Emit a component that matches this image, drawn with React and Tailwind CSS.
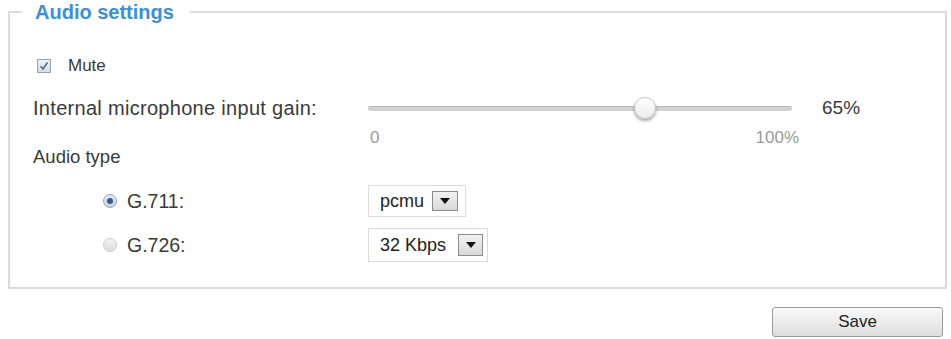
export default function App() {
  return (
    <div className="w-[951px] h-[339px] bg-white font-['Liberation_Sans',Arial,sans-serif] text-[#3a3a3a]">
      <div className="pl-[8px]">
        <fieldset className="w-[939px] h-[289px] border-2 border-[#dcdcdc] m-0 p-0">
          <legend className="ml-[12px] pl-[13px] pr-[16px] h-[24px] leading-[24px] text-[20px] font-bold text-[#3d8fd8]">
            Audio settings
          </legend>

          {/* Mute */}
          <div className="mt-[32px] h-[20px] flex items-center pl-[27px]">
            <span className="w-[14px] h-[14px] border border-[#9aa3ad] bg-gradient-to-b from-[#eef2f6] to-[#d6dde5] flex items-center justify-center">
              <svg width="10" height="10" viewBox="0 0 10 10">
                <path d="M1.5 5.2 L4 8 L8.5 1.5" fill="none" stroke="#4b6a8c" strokeWidth="1.6" />
              </svg>
            </span>
            <span className="ml-[17px] text-[17px] leading-[20px]">Mute</span>
          </div>

          {/* Gain */}
          <div className="mt-[20px] h-[24px] flex items-center">
            <span className="ml-[23px] w-[335px] text-[20px] tracking-[0.3px] leading-[24px] whitespace-nowrap">
              Internal microphone input gain:
            </span>
            <div className="relative w-[424px] h-[24px] flex items-center">
              <div className="w-full h-[5px] rounded-[2px] bg-[#d2d2d2] border-t border-[#bababa]" />
              <div className="absolute left-[266px] top-[1px] w-[22px] h-[22px] rounded-full bg-gradient-to-b from-white to-[#ececec] border border-[#c4c4c4] shadow-[0_2px_3px_rgba(0,0,0,0.35)]" />
            </div>
            <span className="ml-[30px] text-[19px] leading-[24px]">65%</span>
          </div>

          {/* Scale labels */}
          <div className="mt-[9px] h-[18px] flex items-center">
            <div className="ml-[360px] w-[429px] flex justify-between text-[17px] leading-[18px] text-[#9a9a9a]">
              <span>0</span>
              <span>100%</span>
            </div>
          </div>

          {/* Audio type */}
          <div className="h-[20px] flex items-center">
            <span className="ml-[23px] text-[18.5px] leading-[20px]">Audio type</span>
          </div>

          {/* G.711 */}
          <div className="mt-[18px] h-[32px] flex items-center">
            <div className="ml-[93px] w-[265px] flex items-center">
              <span className="w-[14px] h-[14px] rounded-full border border-[#9aa6b2] bg-gradient-to-b from-[#e6edf4] to-[#c6d2de] flex items-center justify-center">
                <span className="w-[6px] h-[6px] rounded-full bg-[#2f5e8e]" />
              </span>
              <span className="ml-[10px] text-[19.5px] leading-[20px]">G.711:</span>
            </div>
            <div className="w-[98px] h-[32px] border border-[#dcdcdc] bg-white flex items-center">
              <span className="ml-[11px] text-[18px] leading-[20px] text-[#222]">pcmu</span>
              <span className="ml-auto mr-[7px] w-[26px] h-[20px] border border-[#8c8c8c] bg-gradient-to-b from-[#f2f2f2] to-[#d8d8d8] flex items-center justify-center">
                <svg width="10" height="6" viewBox="0 0 10 6">
                  <path d="M0 0 H10 L5 6 Z" fill="#111" />
                </svg>
              </span>
            </div>
          </div>

          {/* G.726 */}
          <div className="mt-[12px] h-[32px] flex items-center">
            <div className="ml-[93px] w-[265px] flex items-center">
              <span className="w-[14px] h-[14px] rounded-full border border-[#c8cdd2] bg-gradient-to-b from-[#f4f4f4] to-[#dcdcdc]" />
              <span className="ml-[10px] text-[19.5px] leading-[20px]">G.726:</span>
            </div>
            <div className="w-[120px] h-[34px] border border-[#dcdcdc] bg-white flex items-center">
              <span className="ml-[11px] text-[18px] leading-[20px] text-[#222] whitespace-nowrap">32 Kbps</span>
              <span className="ml-auto mr-[4px] w-[25px] h-[22px] border border-[#8c8c8c] bg-gradient-to-b from-[#f2f2f2] to-[#d8d8d8] flex items-center justify-center">
                <svg width="10" height="6" viewBox="0 0 10 6">
                  <path d="M0 0 H10 L5 6 Z" fill="#111" />
                </svg>
              </span>
            </div>
          </div>
        </fieldset>
      </div>

      <div className="mt-[18px] flex justify-end pr-[8px]">
        <button className="w-[171px] h-[30px] rounded-[3px] border border-[#9a9a9a] bg-gradient-to-b from-[#fafafa] to-[#dedede] text-[17px] text-[#222]">
          Save
        </button>
      </div>
    </div>
  );
}
